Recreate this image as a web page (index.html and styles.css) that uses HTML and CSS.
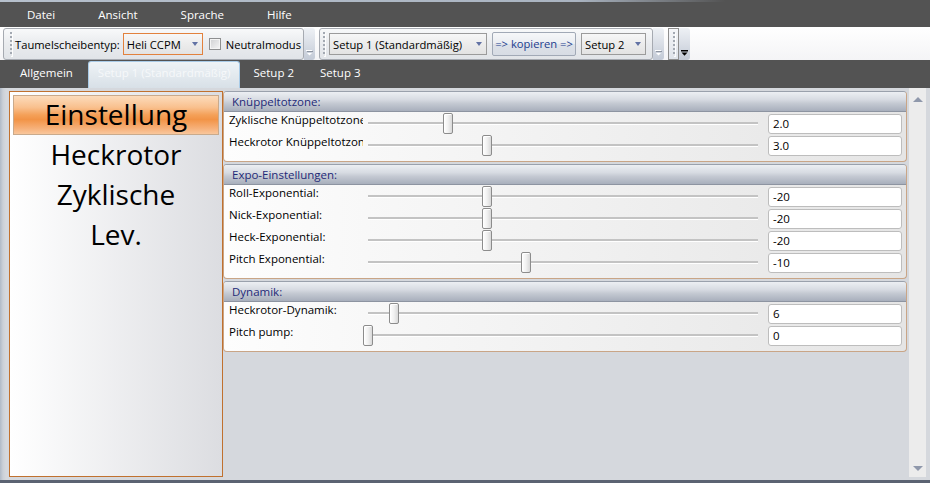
FILE: index.html
```html
<!DOCTYPE html>
<html lang="de">
<head>
<meta charset="utf-8">
<title>Einstellungen</title>
<link rel="stylesheet" href="styles.css">
</head>
<body>
<div class="app">
  <nav class="menubar">
    <span class="menu-item">Datei</span>
    <span class="menu-item">Ansicht</span>
    <span class="menu-item">Sprache</span>
    <span class="menu-item">Hilfe</span>
  </nav>

  <div class="tray">
    <div class="toolbar">
      <div class="tb-main tb-one">
        <span class="grip"></span>
        <span class="tb-label">Taumelscheibentyp:</span>
        <div class="combo combo-focus combo-type"><span>Heli CCPM</span><i class="caret"></i></div>
        <span class="checkbox"></span>
        <span class="tb-label check-label">Neutralmodus</span>
      </div>
      <div class="overflow"><svg class="ov-glyph" width="7" height="6" viewBox="0 0 7 6"><rect x="0" y="0" width="6" height="1" fill="#fff"/><path d="M1 3 H6 L3.5 5.5 Z" fill="#fff"/><rect x="1" y="1" width="6" height="1" fill="#8f96a2"/></svg></div>
    </div>

    <div class="toolbar">
      <div class="tb-main tb-two">
        <span class="grip"></span>
        <div class="combo combo-setup1"><span>Setup 1 (Standardmäßig)</span><i class="caret"></i></div>
        <div class="btn">=&gt; kopieren =&gt;</div>
        <div class="combo combo-setup2"><span>Setup 2</span><i class="caret"></i></div>
      </div>
      <div class="overflow"><svg class="ov-glyph" width="7" height="6" viewBox="0 0 7 6"><rect x="0" y="0" width="6" height="1" fill="#fff"/><path d="M1 3 H6 L3.5 5.5 Z" fill="#fff"/><rect x="1" y="1" width="6" height="1" fill="#8f96a2"/></svg></div>
    </div>

    <div class="toolbar">
      <div class="tb-grip-box"><span class="grip"></span></div>
      <div class="overflow"><svg class="ov-glyph" width="7" height="6" viewBox="0 0 7 6"><rect x="0" y="0" width="7" height="1.5" fill="#000"/><path d="M0.5 2.5 H6.5 L3.5 5.8 Z" fill="#000"/></svg></div>
    </div>
  </div>

  <div class="tabs">
    <span class="tab">Allgemein</span>
    <span class="tab active">Setup 1 (Standardmäßig)</span>
    <span class="tab">Setup 2</span>
    <span class="tab">Setup 3</span>
  </div>

  <div class="content">
    <div class="nav">
      <div class="nav-item active">Einstellung</div>
      <div class="nav-item">Heckrotor</div>
      <div class="nav-item">Zyklische</div>
      <div class="nav-item">Lev.</div>
    </div>

    <div class="groups">
      <section class="group">
        <div class="group-head">Knüppeltotzone:</div>
        <div class="group-body">
          <div class="row">
            <span class="row-label">Zyklische Knüppeltotzone</span>
            <div class="slider"><span class="track"></span><span class="thumb" style="left:80px"></span></div>
            <div class="field">2.0</div>
          </div>
          <div class="row">
            <span class="row-label">Heckrotor Knüppeltotzone</span>
            <div class="slider"><span class="track"></span><span class="thumb" style="left:119px"></span></div>
            <div class="field">3.0</div>
          </div>
        </div>
      </section>

      <section class="group">
        <div class="group-head">Expo-Einstellungen:</div>
        <div class="group-body">
          <div class="row">
            <span class="row-label">Roll-Exponential:</span>
            <div class="slider"><span class="track"></span><span class="thumb" style="left:119px"></span></div>
            <div class="field">-20</div>
          </div>
          <div class="row">
            <span class="row-label">Nick-Exponential:</span>
            <div class="slider"><span class="track"></span><span class="thumb" style="left:119px"></span></div>
            <div class="field">-20</div>
          </div>
          <div class="row">
            <span class="row-label">Heck-Exponential:</span>
            <div class="slider"><span class="track"></span><span class="thumb" style="left:119px"></span></div>
            <div class="field">-20</div>
          </div>
          <div class="row">
            <span class="row-label">Pitch Exponential:</span>
            <div class="slider"><span class="track"></span><span class="thumb" style="left:158px"></span></div>
            <div class="field">-10</div>
          </div>
        </div>
      </section>

      <section class="group">
        <div class="group-head">Dynamik:</div>
        <div class="group-body">
          <div class="row">
            <span class="row-label">Heckrotor-Dynamik:</span>
            <div class="slider"><span class="track"></span><span class="thumb" style="left:26px"></span></div>
            <div class="field">6</div>
          </div>
          <div class="row">
            <span class="row-label">Pitch pump:</span>
            <div class="slider"><span class="track"></span><span class="thumb" style="left:0px"></span></div>
            <div class="field">0</div>
          </div>
        </div>
      </section>
    </div>

    <div class="scrollbar">
      <span class="arrow-up"></span>
      <span class="arrow-down"></span>
    </div>
  </div>
</div>
</body>
</html>
```

FILE: styles.css
```css
* { box-sizing: border-box; }
html, body { margin: 0; padding: 0; }
body {
  width: 930px;
  height: 483px;
  overflow: hidden;
  font-family: "Open Sans", "Noto Sans", sans-serif;
  font-size: 11.5px;
  color: #000;
  background: #535353;
}
.app { display: flex; flex-direction: column; height: 483px; }

/* menu */
.menubar {
  height: 27px;
  display: flex;
  gap: 43px;
  padding: 3px 0 0 27px;
  line-height: 23px;
  color: #fff;
  background: linear-gradient(to right, #b6c0cc 0, #aab4c1 62%, #535353 78%) top left / 100% 2px no-repeat, #535353;
}
.menu-item { white-space: nowrap; }

/* toolbar tray */
.tray {
  height: 33px;
  display: flex;
  align-items: flex-start;
  gap: 4px;
  padding: 1px 0 0 3px;
  font-size: 11.2px;
  background: linear-gradient(#ffffff, #f4f4f6);
}
.toolbar { display: flex; height: 32px; }
.tb-main {
  display: flex;
  align-items: center;
  height: 32px;
  border: 1px solid #a6aab1;
  border-radius: 3px;
  background: linear-gradient(#f8f9fa, #e9ebee 50%, #e1e4e8);
}
.tb-one { padding: 0 2px 0 6px; }
.tb-two { padding: 0 6px 0 3px; }
.grip {
  width: 2px;
  height: 24px;
  flex: none;
  background: repeating-linear-gradient(to bottom, #a3a9b2 0 2px, transparent 2px 4px);
  box-shadow: 1px 1px 0 rgba(255,255,255,0.9);
}
.tb-one .grip { margin-right: 3px; }
.tb-two .grip { margin-right: 4px; }
.tb-label { white-space: nowrap; }
.check-label { margin-left: 5px; }

.combo {
  display: flex;
  align-items: center;
  justify-content: space-between;
  height: 22px;
  border: 1px solid #9b9b9b;
  background: linear-gradient(#f7f7f7, #ececec 50%, #e3e3e3);
  padding: 0 4px 0 3px;
  white-space: nowrap;
}
.combo-focus { border-color: #e2813d; }
.combo-type { width: 80px; margin-left: 3px; }
.combo-setup1 { width: 158px; }
.combo-setup2 { width: 65px; margin-left: 5px; }
.caret {
  width: 0; height: 0;
  border-left: 3px solid transparent;
  border-right: 3px solid transparent;
  border-top: 4px solid #6272a4;
}
.checkbox {
  width: 12px;
  height: 12px;
  margin-left: 6px;
  border: 1px solid #8e8f90;
  background: linear-gradient(135deg, #cfd0d2, #f6f6f6);
  box-shadow: inset 0 0 0 1px #f4f4f4;
}
.btn {
  width: 84px;
  height: 24px;
  margin-left: 5px;
  border: 1px solid #a1a9b6;
  border-radius: 2px;
  background: linear-gradient(#f6f7f9, #eaedf1 50%, #dde1e8 51%, #d7dce4);
  color: #213d8e;
  text-align: center;
  line-height: 22px;
  white-space: nowrap;
}
.overflow {
  width: 11px;
  height: 32px;
  display: flex;
  align-items: flex-end;
  justify-content: center;
  padding-bottom: 4px;
  border-radius: 0 3px 3px 0;
  background: linear-gradient(#eef1f5, #d9dee6 50%, #c3cad6);
}
.tb-grip-box {
  width: 11px;
  height: 32px;
  display: flex;
  align-items: center;
  justify-content: center;
  border: 1px solid #8e8e8e;
  background: linear-gradient(#f5f6f8, #dfe3e9);
}

/* tabs */
.tabs {
  height: 28px;
  display: flex;
  align-items: flex-end;
  padding-left: 7px;
  background: #535353;
}
.tab {
  height: 27px;
  padding: 0 12px 4px;
  line-height: 22px;
  border: 1px solid transparent;
  border-bottom: 0;
  color: #fff;
  white-space: nowrap;
}
.tab.active {
  padding: 0 9px 4px;
  margin-left: 2px;
  border-color: #a9cbe7;
  border-radius: 3px 3px 0 0;
  background: linear-gradient(#eef3f6, #d8e0e7);
  color: #f6f8fa;
}

/* content */
.content {
  flex: 1;
  display: flex;
  align-items: flex-start;
  background: linear-gradient(to right, #b0bac7 0, #cbd0d7 3px, #d5d8dd 6px);
  border-bottom: 3px solid #5b6372;
}
.nav {
  width: 214px;
  flex: none;
  align-self: stretch;
  margin: 3px 0 3px 9px;
  padding: 3px;
  border: 1px solid #c0712f;
  background: linear-gradient(to right, #ffffff, #dcdde1);
  display: flex;
  flex-direction: column;
}
.nav-item {
  height: 40px;
  line-height: 38px;
  text-align: center;
  font-size: 28px;
  color: #000;
  white-space: nowrap;
}
.nav-item.active {
  line-height: 36px;
  border: 1px solid #c9aa8c;
  background: linear-gradient(#fcdcbc 0%, #f9c08e 30%, #f4a058 50%, #f29447 62%, #f6b079 85%, #f9c79c 100%);
}

.groups {
  flex: 1;
  margin: 3px 1px 0 0;
  display: flex;
  flex-direction: column;
  gap: 2px;
}
.group {
  border: 1px solid #c9a586;
  border-top-color: #9aa1ac;
  border-radius: 4px;
  background: linear-gradient(to right, #fdfdfd, #e5e5e5);
  padding-bottom: 4px;
}
.group-head {
  height: 20px;
  line-height: 19px;
  padding-left: 8px;
  color: #1f2a78;
  background: linear-gradient(#eceff3 0%, #d7dbe2 40%, #c4c9d2 60%, #a8afbc 100%);
  border-bottom: 1px solid #8d94a1;
  border-radius: 3px 3px 0 0;
}
.group-body { padding: 1px 4px 0 5px; }
.row { display: flex; height: 22px; }
.row-label {
  width: 134px;
  flex: none;
  overflow: hidden;
  white-space: nowrap;
  line-height: 13px;
}
.slider { position: relative; width: 400px; height: 22px; flex: none; }
.track {
  position: absolute;
  left: 5px;
  right: 5px;
  top: 9px;
  height: 2px;
  background: #c3c3c3;
  box-shadow: 0 1px 0 #ffffff;
}
.thumb {
  position: absolute;
  top: 0;
  width: 10px;
  height: 21px;
  border: 1px solid #8c8c8c;
  border-radius: 2px;
  background: linear-gradient(to right, #ffffff 0%, #f1f1f1 50%, #d9d9d9 100%);
  box-shadow: inset 1px 1px 0 #ffffff;
}
.field {
  width: 134px;
  height: 20px;
  flex: none;
  margin: 1px 0 0 5px;
  padding-left: 4px;
  border: 1px solid #bdbdbd;
  border-radius: 3px;
  background: #fff;
  line-height: 18px;
}

/* scrollbar */
.scrollbar {
  width: 17px;
  flex: none;
  align-self: stretch;
  margin: 0 5px 3px 1px;
  padding: 9px 0 6px;
  background: #ececec;
  display: flex;
  flex-direction: column;
  align-items: center;
  justify-content: space-between;
}
.arrow-up, .arrow-down {
  width: 0;
  height: 0;
  border-left: 5px solid transparent;
  border-right: 5px solid transparent;
}
.arrow-up { border-bottom: 5px solid #8f98ab; }
.arrow-down { border-top: 5px solid #8f98ab; }
```
